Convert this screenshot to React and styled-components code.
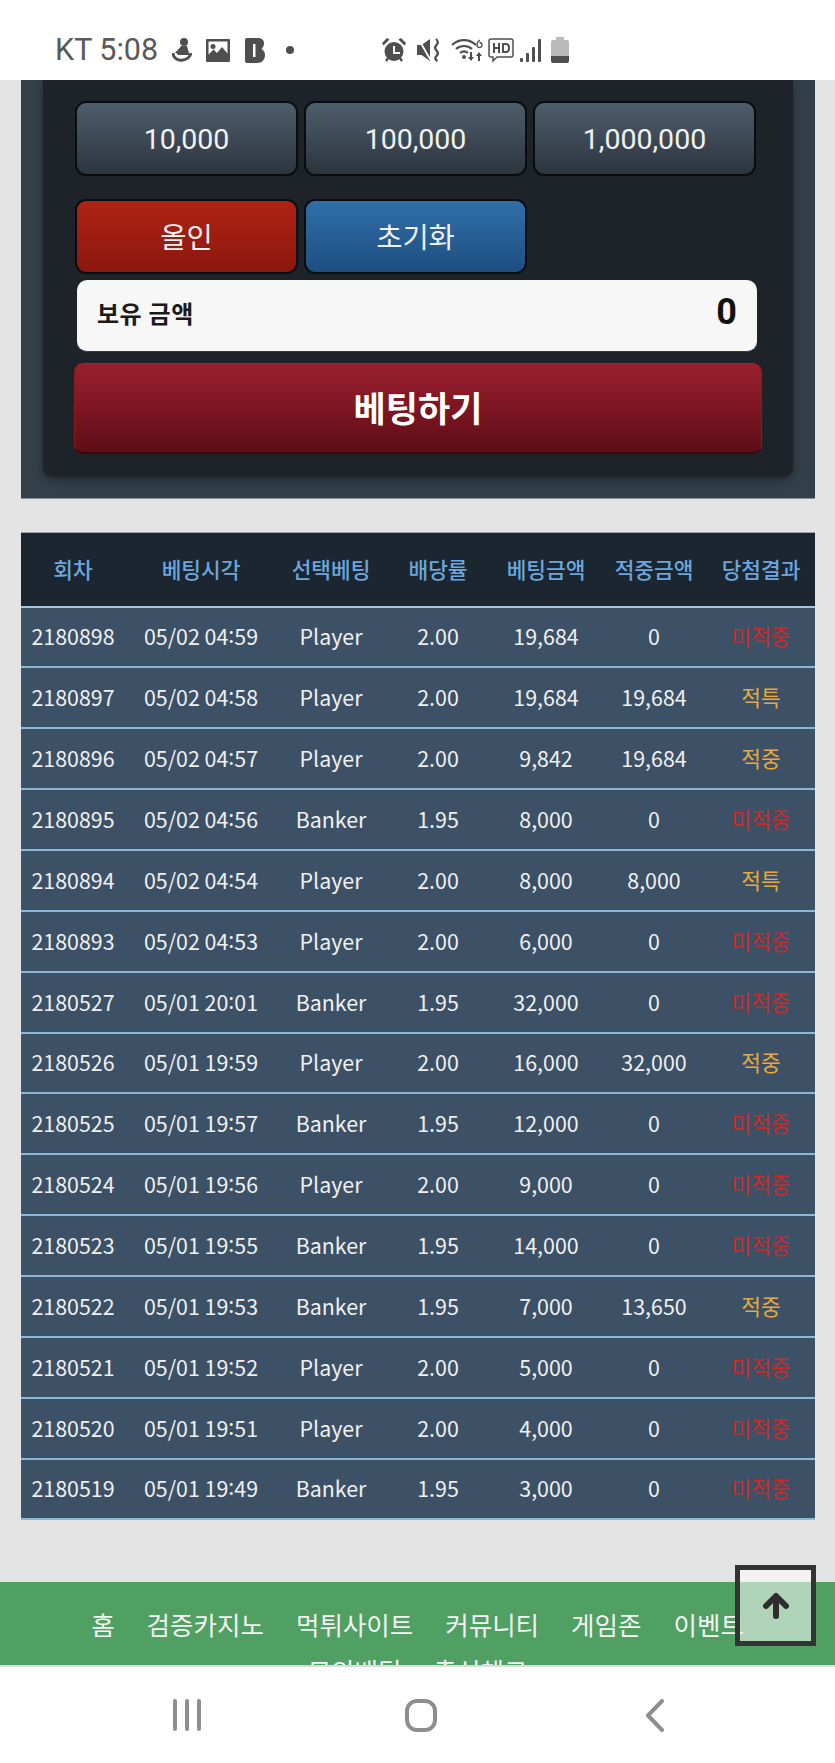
import React from 'react';
import styled, { createGlobalStyle, css } from 'styled-components';

const GlobalStyle = createGlobalStyle`
  html, body {
    margin: 0;
    padding: 0;
    background: #e4e4e4;
  }
`;

const Screen = styled.div`
  position: relative;
  width: 835px;
  height: 1763px;
  display: flex;
  flex-direction: column;
  overflow: hidden;
  font-family: Roboto, "Noto Sans CJK KR", sans-serif;
`;

const StatusBar = styled.div`
  height: 80px;
  flex: none;
  box-sizing: border-box;
  padding: 20px 0 0 55px;
  display: flex;
  align-items: center;
  background: #fff;
  color: #595959;
`;

const Carrier = styled.span`
  font-size: 30.5px;
  line-height: 1;
  width: 103px;
  white-space: nowrap;
`;

const StatusIcon = styled.svg`
  flex: none;
  display: block;
  margin-left: ${(p) => p.$gap}px;
  fill: #4f4f4f;
`;

const Content = styled.div`
  flex: 1;
  min-height: 0;
  overflow: hidden;
  background: #e4e4e4;
`;

const Panel = styled.div`
  width: 794px;
  margin-left: 21px;
  box-sizing: border-box;
  padding: 0 22px 21px;
  background: #333f49;
  border-bottom: 1px solid #8593a0;
`;

const InnerPanel = styled.div`
  box-sizing: border-box;
  padding: 21px 32px 23px;
  background: #1d2328;
  border-radius: 0 0 10px 10px;
  box-shadow: 0 3px 10px rgba(0, 0, 0, 0.35);
`;

const ButtonGrid = styled.div`
  display: grid;
  grid-template-columns: repeat(3, 223px);
  column-gap: 6px;
  margin-bottom: ${(p) => p.$below}px;
`;

const tones = {
  slate: css`
    padding-top: 1px;
    background: linear-gradient(#4e5d6c, #2c353f);
  `,
  red: css`
    padding-bottom: 3px;
    background: linear-gradient(#af2314, #8c170d);
  `,
  blue: css`
    padding-bottom: 3px;
    background: linear-gradient(#306fa9, #1e4e80);
  `,
};

const AmountButton = styled.button`
  height: 75px;
  padding: 0;
  box-sizing: border-box;
  border: 2px solid #0a0d10;
  border-radius: 11px;
  color: #f1f1f1;
  font-family: inherit;
  font-size: 28.5px;
  ${(p) => tones[p.$tone]}
`;

const BalanceBox = styled.div`
  width: 680px;
  height: 72px;
  margin-left: 2px;
  box-sizing: border-box;
  padding: 0 20px 6px;
  display: flex;
  align-items: center;
  justify-content: space-between;
  background: #f7f7f7;
  border-radius: 10px;
  border-bottom: 1px solid #2a3a6a;
  color: #1a1a1a;
`;

const BalanceLabel = styled.span`
  font-size: 24px;
  font-weight: 700;
  letter-spacing: 0.5px;
`;

const BalanceValue = styled.span`
  font-size: 36px;
  font-weight: 700;
  color: #111;
  margin-top: -2px;
`;

const BetButton = styled.button`
  display: block;
  width: 688px;
  height: 91px;
  margin: 11px 0 0 -1px;
  padding: 0 0 3px;
  box-sizing: border-box;
  border: 1px solid #8a1a1c;
  border-top-color: #a8201f;
  border-bottom: 2px solid #3f070c;
  border-radius: 9px;
  background: linear-gradient(#9b1f2e, #5e0d17);
  color: #fff;
  font-family: inherit;
  font-size: 35px;
  font-weight: 700;
`;

const Table = styled.table`
  width: 794px;
  margin: 33px 0 0 21px;
  border-collapse: collapse;
  table-layout: fixed;
  font-family: "Noto Sans CJK KR", sans-serif;
`;

const HeadCell = styled.th`
  width: ${(p) => p.$w}px;
  height: 74px;
  padding: 0 0 2px;
  box-sizing: border-box;
  background: #1c2630;
  border-top: 1px solid #9aa4ad;
  border-bottom: 2px solid #a9c4da;
  color: #6aa7de;
  font-size: 21.4px;
  font-weight: 500;
`;

const Cell = styled.td`
  height: 60.87px;
  padding: 0 0 2px;
  box-sizing: border-box;
  background: #3c5166;
  border-bottom: 2px solid #8ab6d8;
  text-align: center;
  color: ${(p) => p.$color || '#f0f0f0'};
  font-size: 21.4px;
  font-weight: 400;
`;

const RaisedColon = styled.span`
  line-height: 0;
  vertical-align: 2px;
`;

const Footer = styled.div`
  margin-top: 62px;
  box-sizing: border-box;
  padding: 18.5px 60px 24px;
  background: #4fa062;
  display: flex;
  flex-wrap: wrap;
  justify-content: center;
  column-gap: 32px;
  font-family: "Noto Sans CJK KR", sans-serif;
`;

const FooterLink = styled.a`
  color: #f4f4f4;
  font-size: 25.5px;
  line-height: 46px;
  white-space: nowrap;
`;

const ScrollTop = styled.button`
  position: absolute;
  left: 735px;
  top: 1565px;
  width: 81px;
  height: 81px;
  padding: 0;
  box-sizing: border-box;
  border: 5px solid #333;
  background: rgba(255, 255, 255, 0.55);
  display: flex;
  align-items: center;
  justify-content: center;
`;

const ArrowIcon = styled.svg`
  display: block;
  fill: none;
  stroke: #2d2d2d;
  stroke-width: 6;
  stroke-linecap: round;
  stroke-linejoin: round;
`;

const NavBar = styled.div`
  height: 98px;
  flex: none;
  box-sizing: border-box;
  padding-left: 70px;
  display: flex;
  align-items: center;
  background: #fff;
  border-top: 2px solid #dcdcdc;
`;

const NavCell = styled.div`
  width: 234px;
  display: flex;
  justify-content: center;
`;

const NavIcon = styled.svg`
  display: block;
  fill: none;
  stroke: #8e8e8e;
  stroke-width: 4;
  stroke-linecap: round;
  stroke-linejoin: round;
`;

const columns = [
  ['회차', 104],
  ['베팅시각', 152],
  ['선택베팅', 108],
  ['배당률', 106],
  ['베팅금액', 110],
  ['적중금액', 106],
  ['당첨결과', 108],
];

const RED = '#cc2a2a';
const GOLD = '#e8a93a';

const rows = [
  ['2180898', '05/02 04:59', 'Player', '2.00', '19,684', '0', '미적중'],
  ['2180897', '05/02 04:58', 'Player', '2.00', '19,684', '19,684', '적특'],
  ['2180896', '05/02 04:57', 'Player', '2.00', '9,842', '19,684', '적중'],
  ['2180895', '05/02 04:56', 'Banker', '1.95', '8,000', '0', '미적중'],
  ['2180894', '05/02 04:54', 'Player', '2.00', '8,000', '8,000', '적특'],
  ['2180893', '05/02 04:53', 'Player', '2.00', '6,000', '0', '미적중'],
  ['2180527', '05/01 20:01', 'Banker', '1.95', '32,000', '0', '미적중'],
  ['2180526', '05/01 19:59', 'Player', '2.00', '16,000', '32,000', '적중'],
  ['2180525', '05/01 19:57', 'Banker', '1.95', '12,000', '0', '미적중'],
  ['2180524', '05/01 19:56', 'Player', '2.00', '9,000', '0', '미적중'],
  ['2180523', '05/01 19:55', 'Banker', '1.95', '14,000', '0', '미적중'],
  ['2180522', '05/01 19:53', 'Banker', '1.95', '7,000', '13,650', '적중'],
  ['2180521', '05/01 19:52', 'Player', '2.00', '5,000', '0', '미적중'],
  ['2180520', '05/01 19:51', 'Player', '2.00', '4,000', '0', '미적중'],
  ['2180519', '05/01 19:49', 'Banker', '1.95', '3,000', '0', '미적중'],
];

const links = ['홈', '검증카지노', '먹튀사이트', '커뮤니티', '게임존', '이벤트', '모의배팅', '출석체크'];

const StatusIcons = () => (
  <>
    <StatusIcon $gap={14} width="20" height="24" viewBox="0 0 20 24">
      <circle cx="12" cy="4" r="4" />
      <path d="M9 8h6l2.500 9H6c-.5-1.500-2-2-3-2.500C5 13 7 11 9 8z" />
      <path d="M1 15c0 5 5 8 10 7 4-.6 7-3 8-7" fill="none" stroke="#4f4f4f" strokeWidth="3" />
    </StatusIcon>
    <StatusIcon $gap={14} width="24" height="23" viewBox="0 0 24 23">
      <path fillRule="evenodd" d="M1 0h22a1 1 0 0 1 1 1v21a1 1 0 0 1-1 1H1a1 1 0 0 1-1-1V1a1 1 0 0 1 1-1zm1.500 2.500v13l5-5 3.500 3.500 5-6 5.500 6.500v-12zM7 5a2.500 2.500 0 1 1 0 5 2.500 2.500 0 0 1 0-5z" />
    </StatusIcon>
    <StatusIcon $gap={15} width="20" height="25" viewBox="0 0 20 25">
      <path fillRule="evenodd" d="M2 0h11c4 0 6 2.300 6 5.500 0 2.300-1 4-2.500 5.500 2 1.200 3.500 3 3.500 6 0 4.500-3 8-8 8H2a2 2 0 0 1-2-2V2a2 2 0 0 1 2-2zm6 6v13h2.500V6z" />
    </StatusIcon>
    <StatusIcon $gap={21} width="8" height="8" viewBox="0 0 8 8">
      <circle cx="4" cy="4" r="4" />
    </StatusIcon>
    <StatusIcon $gap={88} width="24" height="24" viewBox="0 0 24 24">
      <path d="M12 4a9.500 9.500 0 1 1 0 19 9.500 9.500 0 0 1 0-19z" />
      <path d="M0 5l5-5 2.500 1.500L1.500 7.500zM24 5l-5-5-2.500 1.500 6 6zM3 22l3-3.500 1.500 1L5 24zM21 22l-3-3.500-1.500 1L19 24z" />
      <path d="M11 8h2v6h5v2h-7z" fill="#fff" />
    </StatusIcon>
    <StatusIcon $gap={11} width="24" height="24" viewBox="0 0 24 24">
      <path d="M0 7h4.500L13 1v22l-8.500-6H0z" />
      <path d="M2 0l12 21-1.500 1L.5 1z" fill="#fff" />
      <path d="M19 1c2.500 2.500 2.500 4 .5 6s-2 3.500 0 5.500 2 3.500 0 5.500-1.500 3.500 1 5" fill="none" stroke="#4f4f4f" strokeWidth="2.400" />
    </StatusIcon>
    <StatusIcon $gap={10} width="33" height="22" viewBox="0 0 33 22">
      <path d="M1 6c7-6.500 17-6.500 24 0" fill="none" stroke="#4f4f4f" strokeWidth="2.200" />
      <path d="M5 10c4.500-4 11.500-4 16 0" fill="none" stroke="#4f4f4f" strokeWidth="2.200" />
      <path d="M9 14c2.500-2 5.500-2 8 0" fill="none" stroke="#4f4f4f" strokeWidth="2.200" />
      <circle cx="13" cy="18" r="2" />
      <path d="M19 13h2v5h2l-3 4-3-4h2zM27 22h2v-5h2l-3-4-3 4h2z" />
      <path d="M29 1c-2 1-3 3-3 5a2.500 2.500 0 1 0 2.500-2.500" fill="none" stroke="#4f4f4f" strokeWidth="1.300" />
    </StatusIcon>
    <StatusIcon $gap={4} width="26" height="25" viewBox="0 0 26 25">
      <path d="M3 1h20a2 2 0 0 1 2 2v14a2 2 0 0 1-2 2H9l-4 4v-4H3a2 2 0 0 1-2-2V3a2 2 0 0 1 2-2z" fill="none" stroke="#4f4f4f" strokeWidth="1.500" />
      <path d="M5 5h2v4h3V5h2v10h-2v-4H7v4H5zM14 5h4c2.500 0 4 1.800 4 5s-1.500 5-4 5h-4zm2 2v6h2c1.300 0 2-1 2-3s-.7-3-2-3z" />
    </StatusIcon>
    <StatusIcon $gap={6} width="21" height="23" viewBox="0 0 21 23">
      <rect x="0" y="19" width="3" height="4" rx="1" />
      <rect x="6" y="14" width="3" height="9" rx="1" />
      <rect x="12" y="8" width="3" height="15" rx="1" />
      <rect x="18" y="0" width="3" height="23" rx="1" />
    </StatusIcon>
    <StatusIcon $gap={10} width="18" height="26" viewBox="0 0 18 26">
      <path d="M5 0h8v3h3a2 2 0 0 1 2 2v14H0V5a2 2 0 0 1 2-2h3z" fill="#b9b9b9" />
      <path d="M0 19h18v5a2 2 0 0 1-2 2H2a2 2 0 0 1-2-2z" />
    </StatusIcon>
  </>
);

// the time column has a raised colon in the source font
const TimeText = ({ value }) => {
  const [before, after] = value.split(':');
  return (
    <>
      {before}
      <RaisedColon>:</RaisedColon>
      {after}
    </>
  );
};

const App = () => (
  <Screen>
    <GlobalStyle />
    <StatusBar>
      <Carrier>KT 5:08</Carrier>
      <StatusIcons />
    </StatusBar>
    <Content>
      <Panel>
        <InnerPanel>
          <ButtonGrid $below={23}>
            <AmountButton $tone="slate">10,000</AmountButton>
            <AmountButton $tone="slate">100,000</AmountButton>
            <AmountButton $tone="slate">1,000,000</AmountButton>
          </ButtonGrid>
          <ButtonGrid $below={6}>
            <AmountButton $tone="red">올인</AmountButton>
            <AmountButton $tone="blue">초기화</AmountButton>
          </ButtonGrid>
          <BalanceBox>
            <BalanceLabel>보유 금액</BalanceLabel>
            <BalanceValue>0</BalanceValue>
          </BalanceBox>
          <BetButton>베팅하기</BetButton>
        </InnerPanel>
      </Panel>
      <Table>
        <thead>
          <tr>
            {columns.map(([title, w]) => (
              <HeadCell key={title} $w={w}>{title}</HeadCell>
            ))}
          </tr>
        </thead>
        <tbody>
          {rows.map((row) => (
            <tr key={row[0]}>
              {row.map((value, i) => (
                <Cell key={i} $color={i === 6 ? (value === '미적중' ? RED : GOLD) : undefined}>
                  {i === 1 ? <TimeText value={value} /> : value}
                </Cell>
              ))}
            </tr>
          ))}
        </tbody>
      </Table>
      <Footer>
        {links.map((name) => (
          <FooterLink key={name}>{name}</FooterLink>
        ))}
      </Footer>
    </Content>
    <NavBar>
      <NavCell>
        <NavIcon width="28" height="32" viewBox="0 0 28 32">
          <path d="M2 2v28M14 2v28M26 2v28" />
        </NavIcon>
      </NavCell>
      <NavCell>
        <NavIcon width="34" height="33" viewBox="0 0 34 33">
          <rect x="3" y="2" width="28" height="29" rx="10" />
        </NavIcon>
      </NavCell>
      <NavCell>
        <NavIcon width="20" height="33" viewBox="0 0 20 33">
          <path d="M17 2L3 16.500 17 31" />
        </NavIcon>
      </NavCell>
    </NavBar>
    <ScrollTop>
      <ArrowIcon width="28" height="26" viewBox="0 0 28 26">
        <path d="M14 23V5M4 13L14 3l10 10" />
      </ArrowIcon>
    </ScrollTop>
  </Screen>
);

export default App;
